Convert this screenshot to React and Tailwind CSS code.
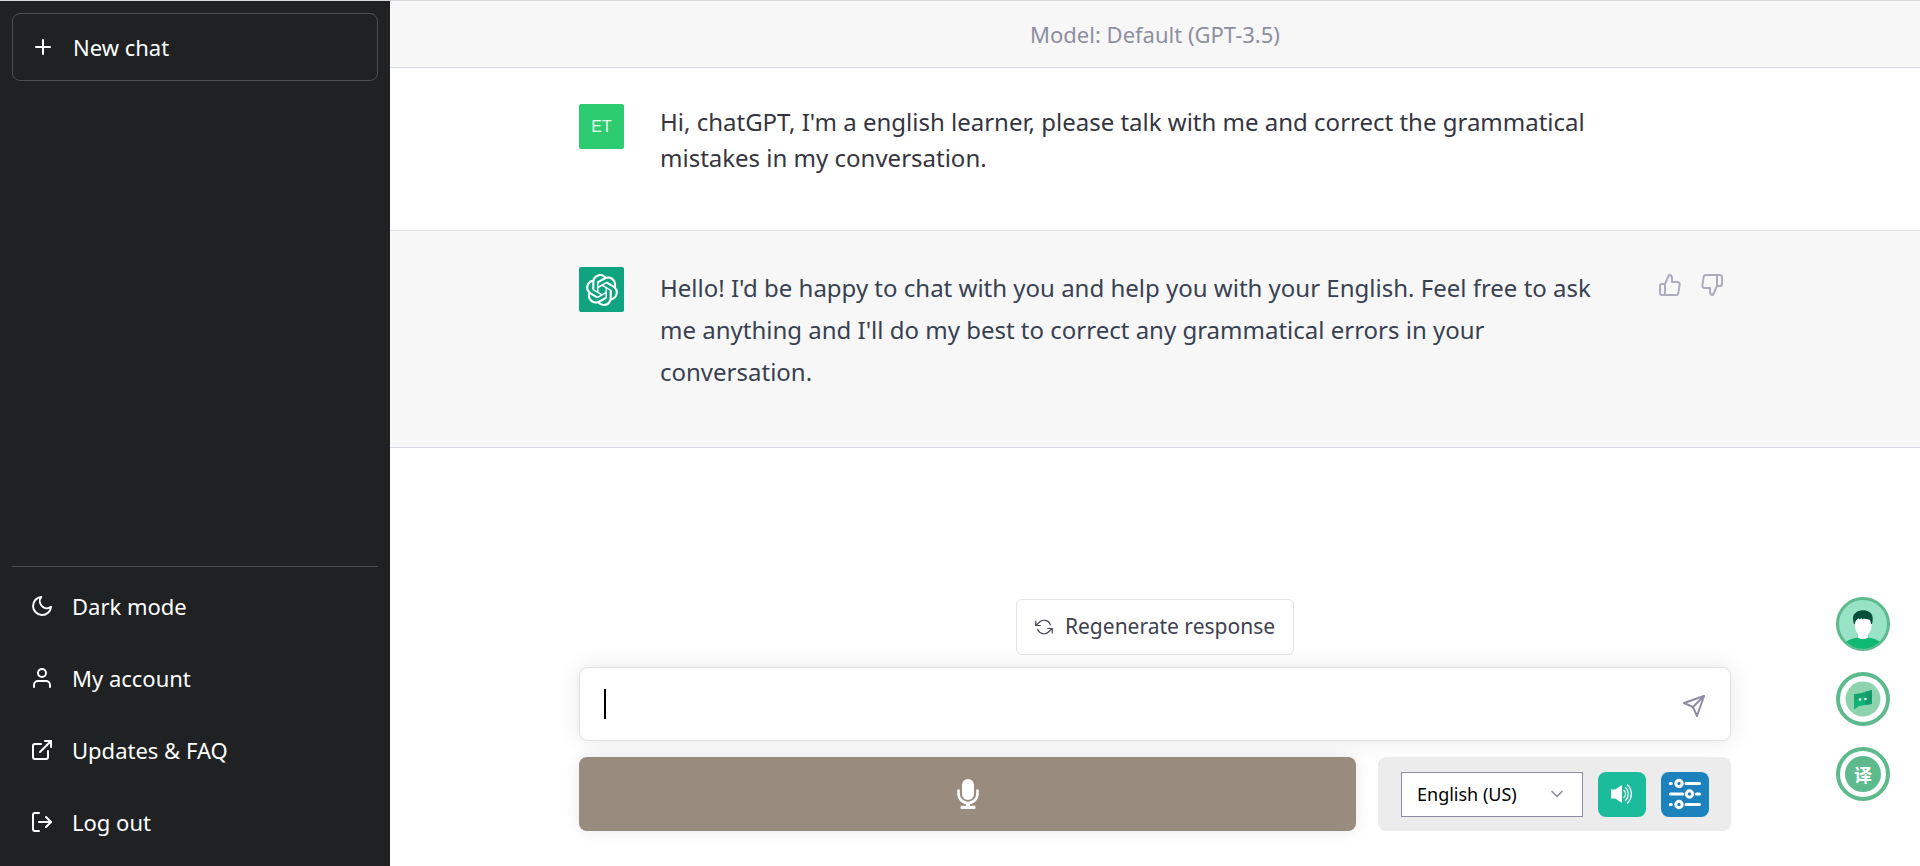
import React from 'react';
import {
  FiPlus, FiMoon, FiUser, FiExternalLink, FiLogOut,
  FiThumbsUp, FiThumbsDown, FiRefreshCcw, FiSend, FiChevronDown,
} from 'react-icons/fi';
import { SiOpenai } from 'react-icons/si';

const menu = [
  { label: 'Dark mode', Icon: FiMoon },
  { label: 'My account', Icon: FiUser },
  { label: 'Updates & FAQ', Icon: FiExternalLink },
  { label: 'Log out', Icon: FiLogOut },
];

function MicIcon() {
  return (
    <svg width="22" height="30" viewBox="0 0 22 30" fill="none" aria-hidden="true">
      <rect x="5" y="0" width="12" height="21" rx="6" fill="#fff" />
      <path d="M1.5 11.500v3a9.500 9.500 0 0 0 19 0v-3" stroke="#fff" strokeWidth="2.600" strokeLinecap="round" />
      <path d="M11 24v4" stroke="#fff" strokeWidth="4" />
      <rect x="3.500" y="26.800" width="15" height="3.200" rx="1" fill="#fff" />
    </svg>
  );
}

function SpeakerIcon() {
  return (
    <svg width="24" height="22" viewBox="0 0 24 22" fill="none" aria-hidden="true">
      <path d="M1 6.500h4L12 2v18l-7-4.500H1z" fill="#fff" />
      <path d="M14 7.500a5 5 0 0 1 0 7" stroke="#fff" strokeWidth="1.300" strokeLinecap="round" />
      <path d="M15.500 4.500a9 9 0 0 1 0 13" stroke="#fff" strokeWidth="1.300" strokeLinecap="round" />
      <path d="M17.500 2a12.500 12.500 0 0 1 0 18" stroke="#fff" strokeWidth="1.300" strokeLinecap="round" />
    </svg>
  );
}

function SlidersIcon() {
  return (
    <svg width="34" height="32" viewBox="0 0 34 32" fill="none" stroke="#fff" strokeWidth="3" strokeLinecap="round" aria-hidden="true">
      <path d="M2.300 5.500h1M18 5.500h13.500M2.300 16h12.500M28.500 16h3M2.300 26.500h1M18 26.500h13.500" />
      <circle cx="11" cy="5.500" r="3.200" />
      <circle cx="21.500" cy="16" r="3.200" />
      <circle cx="11" cy="26.500" r="3.200" />
    </svg>
  );
}

function AvatarIcon() {
  return (
    <svg width="54" height="54" viewBox="0 0 54 54" aria-hidden="true">
      <clipPath id="face"><circle cx="27" cy="27" r="24.500" /></clipPath>
      <circle cx="27" cy="27" r="25.500" fill="#98e2c6" stroke="#5dba8d" strokeWidth="3" />
      <g clipPath="url(#face)">
        <path d="M5 54c1-9 8-12 17-13.500h10c9 1.500 16 4.500 17 13.500z" fill="#0fb873" />
        <path d="M22 34h10v6.500c-3 2-7 2-10 0z" fill="#fff" />
        <path d="M19 22h16.500v7c0 6-4 10-8.300 10S19 35 19 29z" fill="#fff" />
        <path d="M18 27c-1.500-5-1.500-9 1.500-11 3-3.500 9-3.500 13-1.500 4.500 2 5 7 3.500 12.500h-1c0-2-.5-3.500-2-4.500-2-.5-4-.5-5.500-1l-1 1-1-1.500-2 1.500-.5-1.500c-2.500 1.500-4 3-4 6z" fill="#064f3b" />
      </g>
    </svg>
  );
}

function ChatBubbleIcon() {
  return (
    <svg width="54" height="54" viewBox="0 0 54 54" aria-hidden="true">
      <circle cx="27" cy="27" r="25" fill="#fff" stroke="#5dba8d" strokeWidth="4" />
      <circle cx="27" cy="27" r="17.500" fill="#8dd3ae" />
      <path d="M18 23l18-5v14l-13 2-5 3.500z" fill="#0fb577" />
      <path d="M29 20l7-2v14l-7 1z" fill="#149a6c" />
      <path d="M18 22l12-1-1 3-11 4z" fill="#13a56f" />
      <circle cx="24" cy="27.500" r="1.300" fill="#fff" />
      <circle cx="29.500" cy="27" r="1.300" fill="#fff" />
    </svg>
  );
}

export default function App() {
  return (
    <div className="flex min-h-screen border-t border-[#d9d9db] bg-white font-['Noto_Sans','Open_Sans',sans-serif] text-[#343541]">
      <aside className="flex w-[390px] shrink-0 flex-col bg-[#202123] px-3 pt-3 text-[22px] text-white">
        <button type="button" className="flex h-[68px] items-center gap-[18px] rounded-lg border border-[#4d4d4f] px-[18px]">
          <FiPlus className="size-6" />
          New chat
        </button>
        <nav className="mt-auto flex flex-col border-t border-[#4d4d4f] pt-[3px] pb-2">
          {menu.map(({ label, Icon }) => (
            <a key={label} href="#" className="flex h-[72px] items-center gap-[18px] px-[18px]">
              <Icon className="size-6" />
              {label}
            </a>
          ))}
        </nav>
      </aside>

      <div className="flex min-w-0 flex-1 flex-col">
        <header className="flex h-[67px] items-center justify-center border-b border-[#d9d9e3] bg-[#f7f7f8] text-[22px] text-[#8e8ea0]">
          Model: Default (GPT-3.5)
        </header>

        <main>
          <section className="border-b border-[#e3e3e6] py-9">
            <div className="mx-auto flex min-h-[90px] w-full max-w-[1152px] gap-9">
              <div className="flex size-[45px] shrink-0 items-center justify-center rounded-xs bg-[#2ecc71] font-['Liberation_Sans',sans-serif] text-base text-white/90">
                ET
              </div>
              <p className="max-w-[963px] text-2xl leading-9">
                Hi, chatGPT, I'm a english learner, please talk with me and correct the grammatical mistakes in my conversation.
              </p>
            </div>
          </section>

          <section className="border-b border-[#d9d9e3] bg-[#f7f7f8] py-9">
            <div className="mx-auto flex min-h-36 w-full max-w-[1152px] gap-9">
              <div className="flex size-[45px] shrink-0 items-center justify-center rounded-xs bg-[#10a37f] text-white">
                <SiOpenai className="size-8" />
              </div>
              <p className="w-[962px] text-2xl leading-[42px] text-[#374151]">
                Hello! I'd be happy to chat with you and help you with your English. Feel free to ask me anything and I'll do my best to correct any grammatical errors in your conversation.
              </p>
              <div className="flex gap-[18px] self-start pt-1.5 text-[#acacbe]">
                <button type="button" aria-label="Good response"><FiThumbsUp className="size-6" /></button>
                <button type="button" aria-label="Bad response"><FiThumbsDown className="size-6" /></button>
              </div>
            </div>
          </section>
        </main>

        <footer className="mx-auto mt-auto flex w-full max-w-[1152px] flex-col pb-[35px]">
          <button type="button" className="flex h-14 items-center gap-3 self-center rounded-md border border-[#e3e3e8] bg-white px-[18px] text-[21px] text-[#40414f]">
            <FiRefreshCcw className="size-[18px]" strokeWidth={1.5} />
            Regenerate response
          </button>

          <form className="mt-3 flex h-[74px] items-center rounded-lg border border-[#e0e0e3] bg-white px-6 shadow-[0_0_22px_rgba(0,0,0,0.1)]">
            <span className="h-[30px] w-0.5 bg-black" />
            <input aria-label="Message" className="h-full min-w-0 flex-1 bg-transparent text-2xl outline-none" />
            <button type="submit" aria-label="Send message" className="pt-1 text-[#8e8ea0]">
              <FiSend className="size-6" />
            </button>
          </form>

          <div className="mt-4 flex h-[74px] gap-[22px]">
            <button type="button" aria-label="Record" className="flex flex-1 items-center justify-center rounded-lg bg-[#998c7e] shadow-[0_0_15px_rgba(0,0,0,0.1)]">
              <MicIcon />
            </button>
            <div className="flex items-center gap-[15px] rounded-lg bg-[#ececec] pr-[22px] pl-[23px]">
              <div className="relative">
                <select aria-label="Language" defaultValue="us" className="block h-[45px] w-[182px] appearance-none border border-[#8e8ea0] bg-white px-[15px] text-lg text-black">
                  <option value="us">English (US)</option>
                  <option value="uk">English (UK)</option>
                </select>
                <FiChevronDown className="pointer-events-none absolute top-3 right-4 size-5 text-[#8e8ea0]" />
              </div>
              <button type="button" aria-label="Sound" className="flex h-[45px] w-12 items-center justify-center rounded-lg bg-[#1abc9c]">
                <SpeakerIcon />
              </button>
              <button type="button" aria-label="Settings" className="flex h-[45px] w-12 items-center justify-center rounded-lg bg-[#1c82bd]">
                <SlidersIcon />
              </button>
            </div>
          </div>
        </footer>
      </div>

      <div className="fixed right-[30px] bottom-[65px] flex flex-col gap-[21px]">
        <button type="button" aria-label="Assistant"><AvatarIcon /></button>
        <button type="button" aria-label="Chat"><ChatBubbleIcon /></button>
        <button type="button" className="flex size-[54px] items-center justify-center rounded-full border-4 border-[#5dba8d] bg-white">
          <span className="flex size-9 items-center justify-center rounded-full bg-[#5dba8d] font-['Noto_Sans_CJK_SC',sans-serif] text-lg leading-none font-bold text-white">译</span>
        </button>
      </div>
    </div>
  );
}
